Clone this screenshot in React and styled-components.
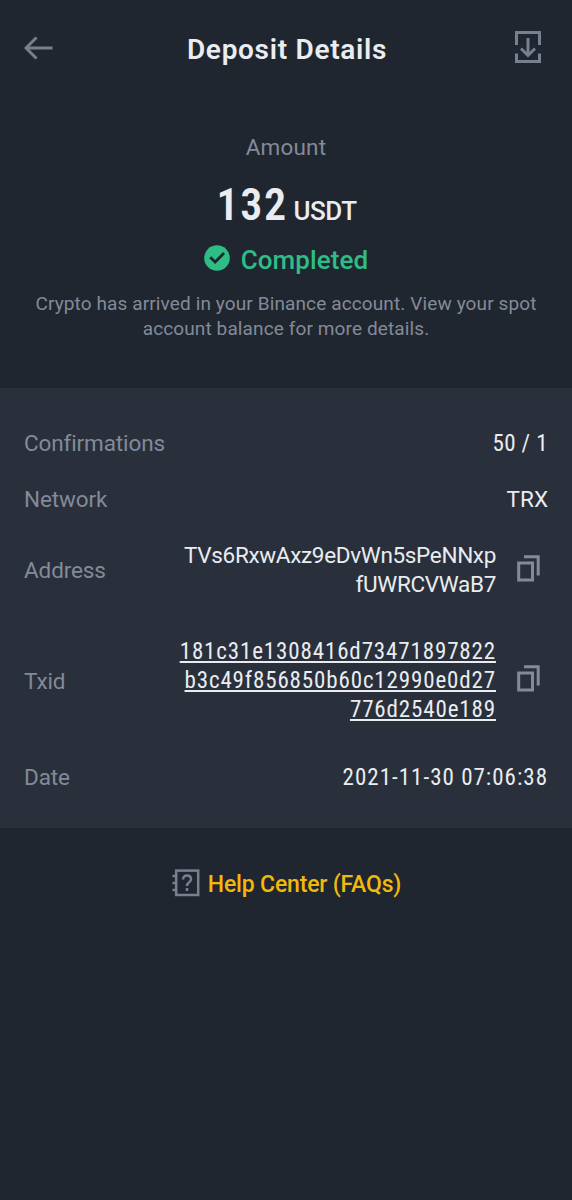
import React from "react";
import styled, { createGlobalStyle } from "styled-components";

const GlobalStyle = createGlobalStyle`
  * {
    box-sizing: border-box;
  }
  body {
    margin: 0;
    background-color: #1f2630;
    font-family: Roboto, "Noto Sans", sans-serif;
  }
`;
const Page = styled.div`
  display: flex;
  flex-direction: column;
  width: 100%;
  min-height: 1200px;
  background-color: #1f2630;
  color: #eaecef;
`;
const Header = styled.header`
  display: flex;
  justify-content: space-between;
  align-items: center;
  height: 96px;
  padding: 0 24px;
`;
const HeaderButton = styled.button`
  display: flex;
  justify-content: ${props => (props.$end ? "flex-end" : "flex-start")};
  width: 48px;
  padding: 0;
  border: none;
  background: none;
  color: #78808f;
  cursor: pointer;
`;
const Title = styled.h1`
  margin: 0;
  padding: 3px 0 0 2px;
  font-size: 28px;
  font-weight: 600;
  letter-spacing: 0.7px;
  line-height: 36px;
`;
const Summary = styled.section`
  display: flex;
  flex-direction: column;
  align-items: center;
  height: 292px;
  padding-top: 35px;
`;
const SummaryLabel = styled.div`
  color: #848a98;
  font-size: 22.5px;
  letter-spacing: 0.2px;
  line-height: 32px;
`;
const Amount = styled.div`
  display: flex;
  align-items: baseline;
  margin-top: 14px;
  padding-left: 1px;
  gap: 6px;
  line-height: 56px;
`;
const AmountValue = styled.span`
  font-size: 44px;
  font-weight: 600;
  font-stretch: 75%;
  letter-spacing: 1.6px;
`;
const AmountUnit = styled.span`
  font-size: 26px;
  font-weight: 500;
  letter-spacing: -0.5px;
`;
const Status = styled.div`
  display: flex;
  align-items: center;
  margin-top: 5px;
  gap: 11px;
  color: #2ebd85;
  font-size: 26px;
  font-weight: 500;
  letter-spacing: 0.1px;
  line-height: 32px;

  svg {
    margin-bottom: 5px;
  }
`;
const Hint = styled.p`
  margin: 15px 0 0;
  color: #848a98;
  font-size: 19px;
  letter-spacing: 0.12px;
  line-height: 25px;
  text-align: center;
`;
const Details = styled.section`
  display: flex;
  flex-direction: column;
  height: 440px;
  padding: 40px 24px 0;
  background-color: #29303c;
`;
const Row = styled.div`
  display: flex;
  align-items: center;
  margin-top: ${props => props.$gap || 0}px;
`;
const RowLabel = styled.div`
  flex: 1;
  color: #848a98;
  font-size: 22.5px;
  letter-spacing: -0.12px;
  line-height: 30px;
`;
const RowValue = styled.div`
  font-size: ${props => (props.$condensed ? 23 : 22.5)}px;
  font-stretch: ${props => (props.$condensed ? 75 : 100)}%;
  letter-spacing: ${props => props.$spacing || 0}px;
  line-height: 29px;
  text-align: right;
`;
const TxLink = styled.a`
  color: inherit;
  text-decoration: underline;
  text-decoration-thickness: 1.5px;
  text-underline-offset: 2px;
  text-decoration-skip-ink: none;
`;
const CopyButton = styled.button`
  display: flex;
  margin: 0 8px 4px 21px;
  padding: 0;
  border: none;
  background: none;
  color: #848a98;
  cursor: pointer;
`;
const Help = styled.a`
  display: flex;
  justify-content: center;
  align-items: center;
  margin-top: 40px;
  padding-left: 1px;
  gap: 8px;
  color: #f0b90b;
  font-size: 23px;
  font-weight: 500;
  letter-spacing: -0.18px;
  line-height: 34px;
`;
const HelpIconWrap = styled.span`
  display: flex;
  padding-bottom: 5px;
  color: #78808f;
`;

const BackIcon = () => (
  <svg width="30" height="24" viewBox="0 0 30 24" fill="none" stroke="currentColor" strokeWidth="3">
    <path d="M28.5 12H3M12.5 1.5L2 12L12.5 22.5" />
  </svg>
);

const SaveIcon = () => (
  <svg width="33" height="36" viewBox="0 0 33 36" fill="none" stroke="currentColor" strokeWidth="3">
    <path d="M1.5 15V2.5H24.5V15M1.5 23.5V31.5H24.5V23.5" />
    <path d="M13 8V25M6 18.5L13 25.5L20 18.5" />
  </svg>
);

const CheckIcon = () => (
  <svg width="26" height="26" viewBox="0 0 26 26">
    <circle cx="13" cy="13" r="12.8" fill="#2ebd85" />
    <path d="M6.2 12.2L11.2 17L20 8" fill="none" stroke="#1f2630" strokeWidth="2.8" />
  </svg>
);

const CopyIcon = () => (
  <svg width="23" height="27" viewBox="0 0 23 27" fill="none" stroke="currentColor" strokeWidth="3">
    <path d="M7 1.8H21.2V20.5" />
    <rect x="1.7" y="8" width="13.8" height="17" />
  </svg>
);

const HelpIcon = () => (
  <svg width="28" height="28" viewBox="0 0 28 28" fill="none" stroke="currentColor" strokeWidth="2.5">
    <rect x="4.2" y="1.6" width="22" height="24.4" />
    <path d="M0.5 7H4M0.5 14H4M0.5 21H4" />
    <path d="M11 10.6C11 8 12.6 6.6 15 6.6C17.4 6.6 19 8 19 10.2C19 13.2 15 13.2 15 17" />
    <path d="M15 19V22" />
  </svg>
);

const address = ["TVs6RxwAxz9eDvWn5sPeNNxp", "fUWRCVWaB7"];
const txid = ["181c31e1308416d73471897822", "b3c49f856850b60c12990e0d27", "776d2540e189"];

const App = () => (
  <>
    <GlobalStyle />
    <Page>
      <Header>
        <HeaderButton aria-label="Back">
          <BackIcon />
        </HeaderButton>
        <Title>Deposit Details</Title>
        <HeaderButton $end aria-label="Save">
          <SaveIcon />
        </HeaderButton>
      </Header>
      <Summary>
        <SummaryLabel>Amount</SummaryLabel>
        <Amount>
          <AmountValue>132</AmountValue>
          <AmountUnit>USDT</AmountUnit>
        </Amount>
        <Status>
          <CheckIcon />
          Completed
        </Status>
        <Hint>
          Crypto has arrived in your Binance account. View your spot
          <br />
          account balance for more details.
        </Hint>
      </Summary>
      <Details>
        <Row>
          <RowLabel>Confirmations</RowLabel>
          <RowValue $condensed $spacing={0.4}>50 / 1</RowValue>
        </Row>
        <Row $gap={26}>
          <RowLabel>Network</RowLabel>
          <RowValue>TRX</RowValue>
        </Row>
        <Row $gap={27}>
          <RowLabel>Address</RowLabel>
          <RowValue $spacing={-0.33}>
            {address.map(line => (
              <div key={line}>{line}</div>
            ))}
          </RowValue>
          <CopyButton aria-label="Copy address">
            <CopyIcon />
          </CopyButton>
        </Row>
        <Row $gap={38}>
          <RowLabel>Txid</RowLabel>
          <RowValue $condensed $spacing={0.86}>
            {txid.map(line => (
              <div key={line}>
                <TxLink>{line}</TxLink>
              </div>
            ))}
          </RowValue>
          <CopyButton aria-label="Copy txid">
            <CopyIcon />
          </CopyButton>
        </Row>
        <Row $gap={38}>
          <RowLabel>Date</RowLabel>
          <RowValue $condensed $spacing={1}>2021-11-30 07:06:38</RowValue>
        </Row>
      </Details>
      <Help>
        <HelpIconWrap>
          <HelpIcon />
        </HelpIconWrap>
        Help Center (FAQs)
      </Help>
    </Page>
  </>
);

export default App;
